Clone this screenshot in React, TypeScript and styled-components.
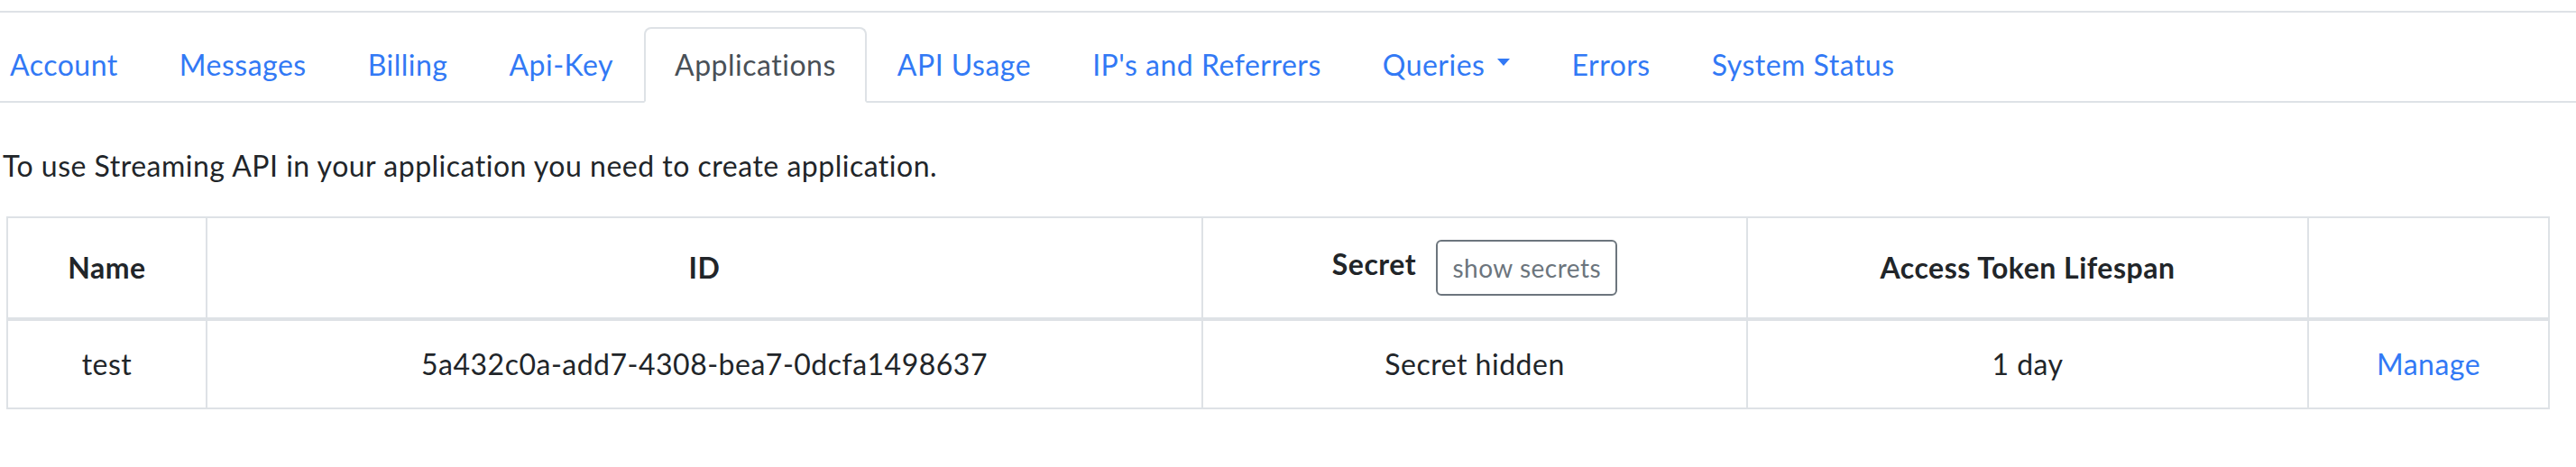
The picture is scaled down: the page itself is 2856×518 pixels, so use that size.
import React from 'react'
import styled, { createGlobalStyle, css } from 'styled-components'

interface Tab {
  label: string
  active?: boolean
  dropdown?: boolean
}

interface AppRow {
  name: string
  id: string
  secret: string
  lifespan: string
}

const tabs: Tab[] = [
  { label: 'Account' },
  { label: 'Messages' },
  { label: 'Billing' },
  { label: 'Api-Key' },
  { label: 'Applications', active: true },
  { label: 'API Usage' },
  { label: "IP's and Referrers" },
  { label: 'Queries', dropdown: true },
  { label: 'Errors' },
  { label: 'System Status' },
]

const rows: AppRow[] = [
  {
    name: 'test',
    id: '5a432c0a-add7-4308-bea7-0dcfa1498637',
    secret: 'Secret hidden',
    lifespan: '1 day',
  },
]

const colWidths = [221, 1104, 604, 622, 267]

function App() {
  return (
    <>
      <GlobalStyle />
      <Page>
        <TabBar>
          <TabList>
            {tabs.map((tab) => (
              <TabItem key={tab.label}>
                <TabLink href="#" $active={tab.active}>
                  {tab.label}
                  {tab.dropdown && <Caret />}
                </TabLink>
              </TabItem>
            ))}
          </TabList>
        </TabBar>
        <Content>
          <Intro>To use Streaming API in your application you need to create application.</Intro>
          <Table>
            <colgroup>
              {colWidths.map((w, i) => (
                <col key={i} style={{ width: w }} />
              ))}
            </colgroup>
            <thead>
              <tr>
                <Th>Name</Th>
                <Th>ID</Th>
                <Th>
                  Secret <ShowButton type="button">show secrets</ShowButton>
                </Th>
                <Th>Access Token Lifespan</Th>
                <Th />
              </tr>
            </thead>
            <tbody>
              {rows.map((row) => (
                <tr key={row.id}>
                  <Td>{row.name}</Td>
                  <Td>{row.id}</Td>
                  <Td>{row.secret}</Td>
                  <Td>{row.lifespan}</Td>
                  <Td>
                    <ManageLink href="#">Manage</ManageLink>
                  </Td>
                </tr>
              ))}
            </tbody>
          </Table>
        </Content>
      </Page>
    </>
  )
}

const GlobalStyle = createGlobalStyle`
  body {
    margin: 0;
    background: #fff;
    color: #212529;
    font-family: Lato, "Open Sans", sans-serif;
    font-size: 32px;
    line-height: 1.5;
    letter-spacing: 0.5px;
    overflow: hidden;
  }
`

const Page = styled.div`
  margin-top: 12px;
  border-top: 2px solid #dee2e6;
  padding-top: 16px;
`

const TabBar = styled.nav`
  border-bottom: 2px solid #dee2e6;
`

const TabList = styled.ul`
  display: flex;
  list-style: none;
  margin: 0 0 -2px -23px;
  padding: 0;
`

const TabItem = styled.li`
  display: block;
`

const TabLink = styled.a<{ $active?: boolean }>`
  display: flex;
  align-items: center;
  padding: 16px 32px;
  border: 2px solid transparent;
  border-radius: 8px 8px 0 0;
  color: #3279f5;
  text-decoration: none;

  ${(p) =>
    p.$active &&
    css`
      color: #495057;
      background: #fff;
      border-color: #dee2e6 #dee2e6 #fff;
    `}
`

const Caret = styled.span`
  display: inline-block;
  margin-left: 14px;
  margin-top: -6px;
  border-top: 8px solid currentColor;
  border-left: 7px solid transparent;
  border-right: 7px solid transparent;
`

const Content = styled.div`
  padding-left: 3px;
`

const Intro = styled.p`
  margin: 46px 0 32px;
`

const Table = styled.table`
  margin-left: 4px;
  width: 2818px;
  table-layout: fixed;
  border-collapse: collapse;
`

const cell = css`
  padding: 24px;
  border: 2px solid #dee2e6;
  text-align: center;
  vertical-align: middle;
`

const Th = styled.th`
  ${cell}
  border-bottom-width: 4px;
  font-weight: 700;
`

const Td = styled.td`
  ${cell}
`

const ShowButton = styled.button`
  margin-left: 14px;
  padding: 8px 16px;
  border: 2px solid #6c757d;
  border-radius: 6px;
  background: transparent;
  color: #6c757d;
  font-family: inherit;
  font-size: 28px;
  line-height: 1.5;
  letter-spacing: inherit;
  vertical-align: middle;
`

const ManageLink = styled.a`
  color: #3279f5;
  text-decoration: none;
`

export default App
